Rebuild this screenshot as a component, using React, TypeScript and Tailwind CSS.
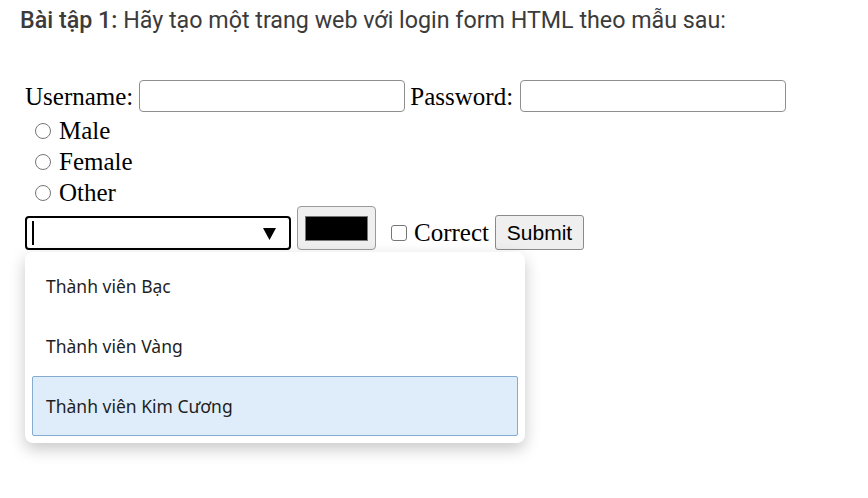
import React from 'react';

const options = ['Thành viên Bạc', 'Thành viên Vàng', 'Thành viên Kim Cương'];

const Radio = ({ label }: { label: string }) => (
  <div className="flex h-[31px] items-center pl-[10px]">
    <span className="mr-[8px] h-[16px] w-[16px] rounded-full border border-[#767676] bg-white" />
    <span>{label}</span>
  </div>
);

export default function App() {
  return (
    <div className="relative h-[498px] w-[868px] overflow-hidden bg-white">
      {/* Heading */}
      <p className="pl-[20px] pt-[6px] font-['Roboto',sans-serif] text-[23.25px] leading-[28px] text-[#3b3b3b]">
        <span className="font-medium">Bài tập 1:</span> Hãy tạo một trang web với login form HTML theo mẫu sau:
      </p>

      {/* Form */}
      <div className="mt-[46px] pl-[25px] font-['Liberation_Serif',serif] text-[25px] leading-[31px] text-black">
        <div className="flex h-[32px] items-center">
          <span>Username:</span>
          <input className="ml-[6px] h-[32px] w-[266px] rounded-[4px] border border-[#8f8f8f] bg-white outline-none" />
          <span className="ml-[5px]">Password:</span>
          <input className="ml-[7px] h-[32px] w-[266px] rounded-[4px] border border-[#8f8f8f] bg-white outline-none" />
        </div>

        <div className="mt-[3px]">
          <Radio label="Male" />
          <Radio label="Female" />
          <Radio label="Other" />
        </div>

        <div className="mt-[-2px] flex items-end">
          {/* Focused select */}
          <div className="relative flex h-[34px] w-[266px] items-center rounded-[4px] border-2 border-black bg-white">
            <span className="ml-[5px] h-[24px] w-[2px] bg-black" />
            <svg className="absolute right-[13px] top-[10px]" width="13" height="12" viewBox="0 0 13 12">
              <path d="M0 0 H13 L6.5 12 Z" fill="#000" />
            </svg>
          </div>

          {/* Color input */}
          <div className="ml-[6px] flex h-[44px] w-[79px] items-center justify-center rounded-[4px] border border-[#9a9a9a] bg-[#efefef]">
            <div className="h-[25px] w-[63px] border border-[#777] bg-black" />
          </div>

          {/* Checkbox */}
          <div className="mb-[2px] ml-[15px] flex h-[31px] items-center">
            <span className="mr-[7px] h-[16px] w-[16px] rounded-[3px] border border-[#767676] bg-white" />
            <span>Correct</span>
          </div>

          <button className="ml-[6px] h-[35px] w-[89px] rounded-[3px] border border-[#8a8a8a] bg-[#efefef] font-['Liberation_Sans',sans-serif] text-[21px] leading-none text-black">
            Submit
          </button>
        </div>
      </div>

      {/* Open dropdown list */}
      <div className="absolute left-[25px] top-[252px] w-[500px] rounded-[8px] bg-white px-[7px] pb-[7px] pt-[4px] font-['Noto_Sans',sans-serif] text-[17.5px] text-[#1f1f1f] shadow-[0_6px_16px_rgba(0,0,0,0.22)]">
        {options.map((o, i) => (
          <div
            key={o}
            className={`flex h-[60px] items-center rounded-[2px] border pl-[13px] ${
              i === 2 ? 'border-[#85acd0] bg-[#deedf9]' : 'border-transparent'
            }`}
          >
            {o}
          </div>
        ))}
      </div>
    </div>
  );
}
